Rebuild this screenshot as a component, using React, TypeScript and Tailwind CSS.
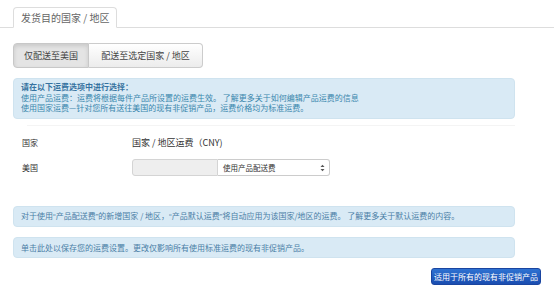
import React from "react";

const Q = ({ c }: { c: string }) => (
  <span style={{ fontFamily: '"Liberation Sans", sans-serif' }}>{c}</span>
);

export default function App() {
  return (
    <div
      className="w-[554px] h-[293px] bg-white overflow-hidden relative"
      style={{ fontFamily: '"Noto Sans CJK SC", "Noto Sans", sans-serif' }}
    >
      {/* Tabs */}
      <div className="pt-[7px] border-b border-[#dddddd] flex">
        <div className="ml-[13px] h-[21px] -mb-px px-[7px] border border-[#dddddd] border-b-white rounded-t-[4px] bg-white flex items-center text-[10px] text-[#666666]">
          发货目的国家 / 地区
        </div>
      </div>

      {/* Button group */}
      <div className="mt-[15px] ml-[13px] flex h-[25px]">
        <div className="w-[76px] flex items-center justify-center text-[9px] text-[#444444] bg-[#e4e4e4] border border-[#c8c8c8] rounded-l-[4px] shadow-[inset_0_2px_4px_rgba(0,0,0,0.12)]">
          仅配送至美国
        </div>
        <div className="w-[114px] flex items-center justify-center text-[9px] text-[#444444] bg-gradient-to-b from-white to-[#ececec] border border-l-0 border-[#cccccc] rounded-r-[4px]">
          配送至选定国家 / 地区
        </div>
      </div>

      {/* Info box 1 */}
      <div className="mt-[10px] ml-[13px] w-[502px] h-[41px] bg-[#d9eaf5] border border-[#cfe3ef] rounded-[4px] px-[7px] pt-[3px] text-[8px] leading-[10.5px] text-[#3a87ad]">
        <div className="font-semibold text-[#3673a0]">请在以下运费选项中进行选择：</div>
        <div>使用产品运费：运费将根据每件产品所设置的运费生效。 了解更多关于如何编辑产品运费的信息</div>
        <div>使用国家运费—针对您所有送往美国的现有非促销产品，运费价格均为标准运费。</div>
      </div>

      <div className="mt-[6px] ml-[27px] w-[488px] h-px bg-[#f4f4f4]" />

      {/* Table */}
      <div className="mt-[11px] ml-[22px] flex flex-col text-[8px] text-[#333333]">
        <div className="flex h-[12px] items-center">
          <div className="w-[110px]">国家</div>
          <div className="text-[9px]">国家 / 地区运费（CNY)</div>
        </div>
        <div className="flex items-center mt-[10px] h-[17px]">
          <div className="w-[110px]">美国</div>
          <div className="w-[86px] h-[17px] bg-[#eeeeee] border border-[#d4d4d4] rounded-l-[3px]" />
          <div className="w-[112px] h-[17px] bg-white border border-l-0 border-[#cccccc] rounded-r-[3px] flex items-center justify-between pl-[5px] pr-[4px] text-[7.5px]">
            <span>使用产品配送费</span>
            <svg width="5" height="8" viewBox="0 0 5 8">
              <path d="M0.5 3 L2.5 0.8 L4.5 3 Z" fill="#555" />
              <path d="M0.5 5 L2.5 7.2 L4.5 5 Z" fill="#555" />
            </svg>
          </div>
        </div>
      </div>

      {/* Info box 2 */}
      <div className="mt-[30px] ml-[13px] w-[502px] h-[21px] bg-[#d9eaf5] border border-[#cfe3ef] rounded-[4px] px-[7px] flex items-center text-[8px] text-[#4a7ea6]">
        <span>
          对于使用<Q c="“" />产品配送费<Q c="”" />的新增国家 / 地区，<Q c="“" />产品默认运费<Q c="”" />将自动应用为该国家/地区的运费。 了解更多关于默认运费的内容。
        </span>
      </div>

      {/* Info box 3 */}
      <div className="mt-[10px] ml-[13px] w-[502px] h-[21px] bg-[#d9eaf5] border border-[#cfe3ef] rounded-[4px] px-[7px] flex items-center text-[8px] text-[#4a7ea6]">
        单击此处以保存您的运费设置。更改仅影响所有使用标准运费的现有非促销产品。
      </div>

      {/* Primary button */}
      <div className="mt-[10px] flex justify-end pr-[13px]">
        <div className="w-[110px] h-[17px] rounded-[3px] bg-gradient-to-b from-[#2f72d2] to-[#1a4db0] border border-[#1a45a0] flex items-center justify-center text-[8px] text-white">
          适用于所有的现有非促销产品
        </div>
      </div>
    </div>
  );
}
